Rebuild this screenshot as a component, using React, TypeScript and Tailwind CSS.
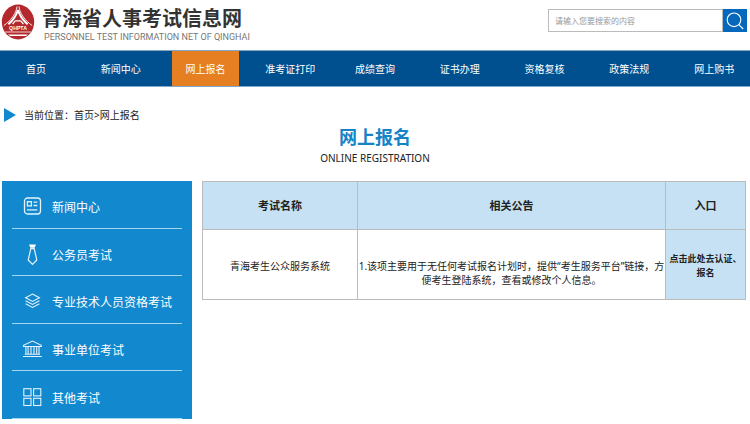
import type { ReactNode } from 'react';

const navItems = ['首页', '新闻中心', '网上报名', '准考证打印', '成绩查询', '证书办理', '资格复核', '政策法规', '网上购书'];
const activeItem = '网上报名';

function Logo() {
  return (
    <svg viewBox="0 0 34 36" className="h-9 w-[34px] shrink-0" aria-hidden="true">
      <ellipse cx="17" cy="18" rx="16.2" ry="17.4" fill="#b3282d" />
      <g fill="none" stroke="#fff">
        <path d="M16 2.5C15.4 9.5 9.5 17 2.8 21.5" strokeWidth="0.9" />
        <path d="M18 2.5C18.6 9.5 24.5 17 31.2 21.5" strokeWidth="0.9" />
        <path d="M17 6C15.4 11.5 11.5 16.8 7.4 20.2M17 6C18.6 11.5 22.5 16.8 26.6 20.2" strokeWidth="2" />
        <path d="M14.2 16.8L11.6 20.2M19.8 16.8L22.4 20.2M14.2 16.8H19.8" strokeWidth="1.3" />
        <path d="M4 28H30" strokeWidth="0.8" />
      </g>
      <path d="M7 30.4H27L25 32H9Z" fill="#fff" />
      <text x="17" y="26.2" textAnchor="middle" fill="#fff" fontSize="5.2" fontWeight="700" fontFamily="Liberation Sans, Arial, sans-serif">
        QHPTA
      </text>
    </svg>
  );
}

function Icon({ children }: { children: ReactNode }) {
  return (
    <svg viewBox="0 0 20 22" className="h-[22px] w-5 shrink-0" fill="none" stroke="#e4f3fb" strokeWidth="1.1" aria-hidden="true">
      {children}
    </svg>
  );
}

const sideItems: { label: string; icon: ReactNode }[] = [
  {
    label: '新闻中心',
    icon: (
      <>
        <rect x="2.5" y="2" width="16" height="16" rx="3" strokeWidth="1.3" />
        <rect x="5.4" y="5.7" width="4" height="4.2" strokeWidth="1.3" />
        <path d="M11.5 6.2H15.3M11.5 9.5H15.3M5 13.8H15.3" strokeWidth="1.3" />
      </>
    ),
  },
  {
    label: '公务员考试',
    icon: (
      <>
        <path d="M7 0.5H14L12.6 3.7H8.4Z" fill="#fff" stroke="none" />
        <path d="M8.8 4.7H12.2L14.8 16L10.5 20.5L6.2 16Z" strokeWidth="1.2" />
      </>
    ),
  },
  {
    label: '专业技术人员资格考试',
    icon: (
      <>
        <path d="M10.5 3L17.4 6.7L10.5 10.4L3.6 6.7Z" />
        <path d="M3.6 9.7L10.5 13.4L17.4 9.7M3.6 12.7L10.5 16.4L17.4 12.7" />
      </>
    ),
  },
  {
    label: '事业单位考试',
    icon: (
      <>
        <path d="M1.5 7.5V6.3L10.5 2L19.3 6.3V7.5Z" />
        <path d="M3.9 7.5V15M6.1 7.5V15M9 7.5V15M12 7.5V15M14.7 7.5V15M17 7.5V15M2.8 15.2H18M1 17.5H19.8" />
      </>
    ),
  },
  {
    label: '其他考试',
    icon: (
      <>
        <rect x="1.8" y="1.7" width="7.2" height="7.2" />
        <rect x="11.6" y="1.7" width="7.2" height="7.2" />
        <rect x="1.8" y="11.3" width="7.2" height="7.2" />
        <rect x="11.6" y="11.3" width="7.2" height="7.2" />
      </>
    ),
  },
];

export default function App() {
  return (
    <div className="bg-white font-['Noto_Sans','Noto_Sans_CJK_SC',sans-serif] text-[10px] text-[#222]" lang="zh-CN">
      <header className="flex h-[50px] items-start justify-between pr-[3px] pl-px">
        <div className="flex gap-[7px] pt-1">
          <Logo />
          <div className="flex flex-col">
            <h1 className="font-['Noto_Sans_CJK_SC',sans-serif] text-[20px] leading-7 font-bold text-[#333]">青海省人事考试信息网</h1>
            <p className="pl-0.5 font-[Roboto,sans-serif] text-[9px] leading-[10px] text-[#777]">PERSONNEL TEST INFORMATION NET OF QINGHAI</p>
          </div>
        </div>
        <form className="flex pt-[9px]" onSubmit={(e) => e.preventDefault()}>
          <input
            type="text"
            aria-label="搜索"
            placeholder="请输入您要搜索的内容"
            className="h-[23px] w-[175px] border border-[#bbb] px-1.5 text-[8px] outline-none placeholder:text-[#999]"
          />
          <button type="submit" aria-label="搜索" className="flex h-[23px] w-6 items-center justify-center bg-[#0568bd]">
            <svg viewBox="0 0 18 18" className="size-[18px]" fill="none" stroke="#fff" strokeWidth="1.1" aria-hidden="true">
              <circle cx="8" cy="7.8" r="6.8" />
              <path d="M12.8 12.6L17.2 17" />
            </svg>
          </button>
        </form>
      </header>

      <nav className="flex h-[37px] gap-[17px] border-y border-[#7fa8c9] bg-[#00508f] px-0.5">
        {navItems.map((item) => (
          <a
            key={item}
            href="#"
            className={
              item === activeItem
                ? 'flex flex-1 basis-0 items-center justify-center bg-[#e67e22] pt-0.5 whitespace-nowrap text-white'
                : 'flex flex-1 basis-0 items-center justify-center pt-0.5 whitespace-nowrap text-white'
            }
          >
            {item}
          </a>
        ))}
      </nav>

      <div className="flex items-center gap-2 pt-5 pl-1">
        <svg viewBox="0 0 12 14" className="h-3.5 w-3" aria-hidden="true">
          <path d="M0 0L12 7L0 14Z" fill="#1288cf" />
        </svg>
        <p className="leading-4">
          当前位置：<a href="#">首页</a>&gt;<a href="#">网上报名</a>
        </p>
      </div>

      <div className="pt-[2px] text-center">
        <h2 className="text-[18px] leading-6 font-bold text-[#1583c6]">网上报名</h2>
        <p className="pt-[1px] leading-4">ONLINE REGISTRATION</p>
      </div>

      <main className="flex items-start gap-2.5 pt-[15px] pr-1 pl-0.5">
        <aside className="grid h-[238px] w-[190px] shrink-0 grid-rows-5 bg-[#1288cf] px-2.5">
          {sideItems.map(({ label, icon }) => (
            <a key={label} href="#" className="flex items-center gap-2.5 border-b border-[#a9d6ef] pt-1.5 pl-2.5 text-[12px] text-white">
              <Icon>{icon}</Icon>
              <span className="pt-0.5">{label}</span>
            </a>
          ))}
        </aside>

        <table className="min-w-0 flex-1 table-fixed border-collapse text-center">
          <colgroup>
            <col className="w-[155px]" />
            <col />
            <col className="w-[80px]" />
          </colgroup>
          <thead>
            <tr className="h-12 bg-[#c5e1f3] text-[11px]">
              <th className="border border-[#bbb] p-0 pt-0.5 font-bold">考试名称</th>
              <th className="border border-[#bbb] p-0 pt-0.5 font-bold">相关公告</th>
              <th className="border border-[#bbb] p-0 pt-0.5 font-bold">入口</th>
            </tr>
          </thead>
          <tbody>
            <tr className="h-[70px] leading-[14px]">
              <td className="border border-[#bbb] p-0 pt-0.5">青海考生公众服务系统</td>
              <td className="border border-[#bbb] p-0 pt-4">1.该项主要用于无任何考试报名计划时，提供“考生服务平台”链接，方便考生登陆系统，查看或修改个人信息。</td>
              <td className="border border-[#bbb] bg-[#c5e1f3] p-0 pt-0.5 text-[9px] font-bold">
                <a href="#">点击此处去认证、报名</a>
              </td>
            </tr>
          </tbody>
        </table>
      </main>
    </div>
  );
}
